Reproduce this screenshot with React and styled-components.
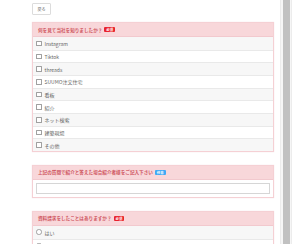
import React from 'react';
import styled, { createGlobalStyle } from 'styled-components';

const GlobalStyle = createGlobalStyle`
html, body {
  margin: 0;
  padding: 0;
  background: #fff;
  font-family: 'Noto Sans CJK JP', 'Noto Sans', sans-serif;
}
`
const Page = styled.div`
display: flex;
height: 244px;
width: 300px;
overflow: hidden;
`
const Main = styled.div`
width: 242px;
padding: 3px 4px 0 32px;
display: flex;
flex-direction: column;
`
const BackButton = styled.button`
width: 19px;
height: 12px;
padding: 0;
border: 1px solid #dcdcdc;
border-radius: 1px;
background: #fff;
color: #666;
font-family: inherit;
font-size: 4px;
line-height: 10px;
`
const Card = styled.div`
margin-top: ${p => p.gap}px;
border: 1px solid #f5d0d4;
box-shadow: 0 0 1px rgba(230, 150, 160, 0.3);
background: #fff;
`
const Header = styled.div`
height: 14px;
display: flex;
align-items: center;
gap: 2px;
padding: 0 5px;
background: #f8d7da;
border-bottom: 1px solid #f2c9ce;
box-sizing: border-box;
`
const Title = styled.span`
color: #cf5560;
font-size: 4.6px;
font-weight: bold;
white-space: nowrap;
`
const Badge = styled.span`
display: inline-block;
height: 5px;
line-height: 5px;
padding: 0 2px;
font-size: 3.4px;
font-weight: bold;
color: #fff;
background: ${p => (p.optional ? '#3fa9f5' : '#e8222c')};
border-radius: 1px;
`
const Row = styled.div`
height: 12.67px;
box-sizing: border-box;
display: flex;
align-items: center;
gap: 3px;
padding: 0 3px;
font-size: 5px;
color: #666;
background: ${p => (p.odd ? '#f7f7f7' : '#fff')};
border-top: ${p => (p.first ? 'none' : '1px solid #e9e9e9')};
`
const Check = styled.span`
width: 3.5px;
height: 3.5px;
border: 0.5px solid #a0a0a0;
border-radius: ${p => (p.round ? '50%' : '0.5px')};
background: #fff;
flex-shrink: 0;
`
const InputWrap = styled.div`
padding: 3px;
`
const TextInput = styled.div`
height: 11px;
border: 1px solid #d6d6d6;
background: #fff;
box-sizing: border-box;
`
const Rail = styled.div`
width: 10px;
margin-left: 2px;
border-left: 1px solid #ececec;
border-right: 1px solid #ececec;
background: #f6f6f6;
display: flex;
justify-content: center;
`
const Thumb = styled.div`
width: 7px;
height: 100%;
background: #c1c1c1;
`

const media = ['Instagram', 'Tiktok', 'threads', 'SUUMO注文住宅', '看板', '紹介', 'ネット検索', '建築現場', 'その他'];

export default function App () {
  return (
    <Page>
      <GlobalStyle />
      <Main>
        <BackButton>戻る</BackButton>
        <Card gap={7}>
          <Header><Title>何を見て当社を知りましたか？</Title><Badge>必須</Badge></Header>
          {media.map((item, index) => (
            <Row key={item} odd={index % 2 === 0} first={index === 0}><Check />{item}</Row>
          ))}
        </Card>
        <Card gap={13}>
          <Header><Title>上記の質問で紹介と答えた場合紹介者様をご記入下さい</Title><Badge optional>任意</Badge></Header>
          <InputWrap><TextInput /></InputWrap>
        </Card>
        <Card gap={13}>
          <Header><Title>資料請求をしたことはありますか？</Title><Badge>必須</Badge></Header>
          <Row odd first><Check round />はい</Row>
          <Row><Check round />いいえ</Row>
        </Card>
      </Main>
      <Rail><Thumb /></Rail>
    </Page>
  )
}
